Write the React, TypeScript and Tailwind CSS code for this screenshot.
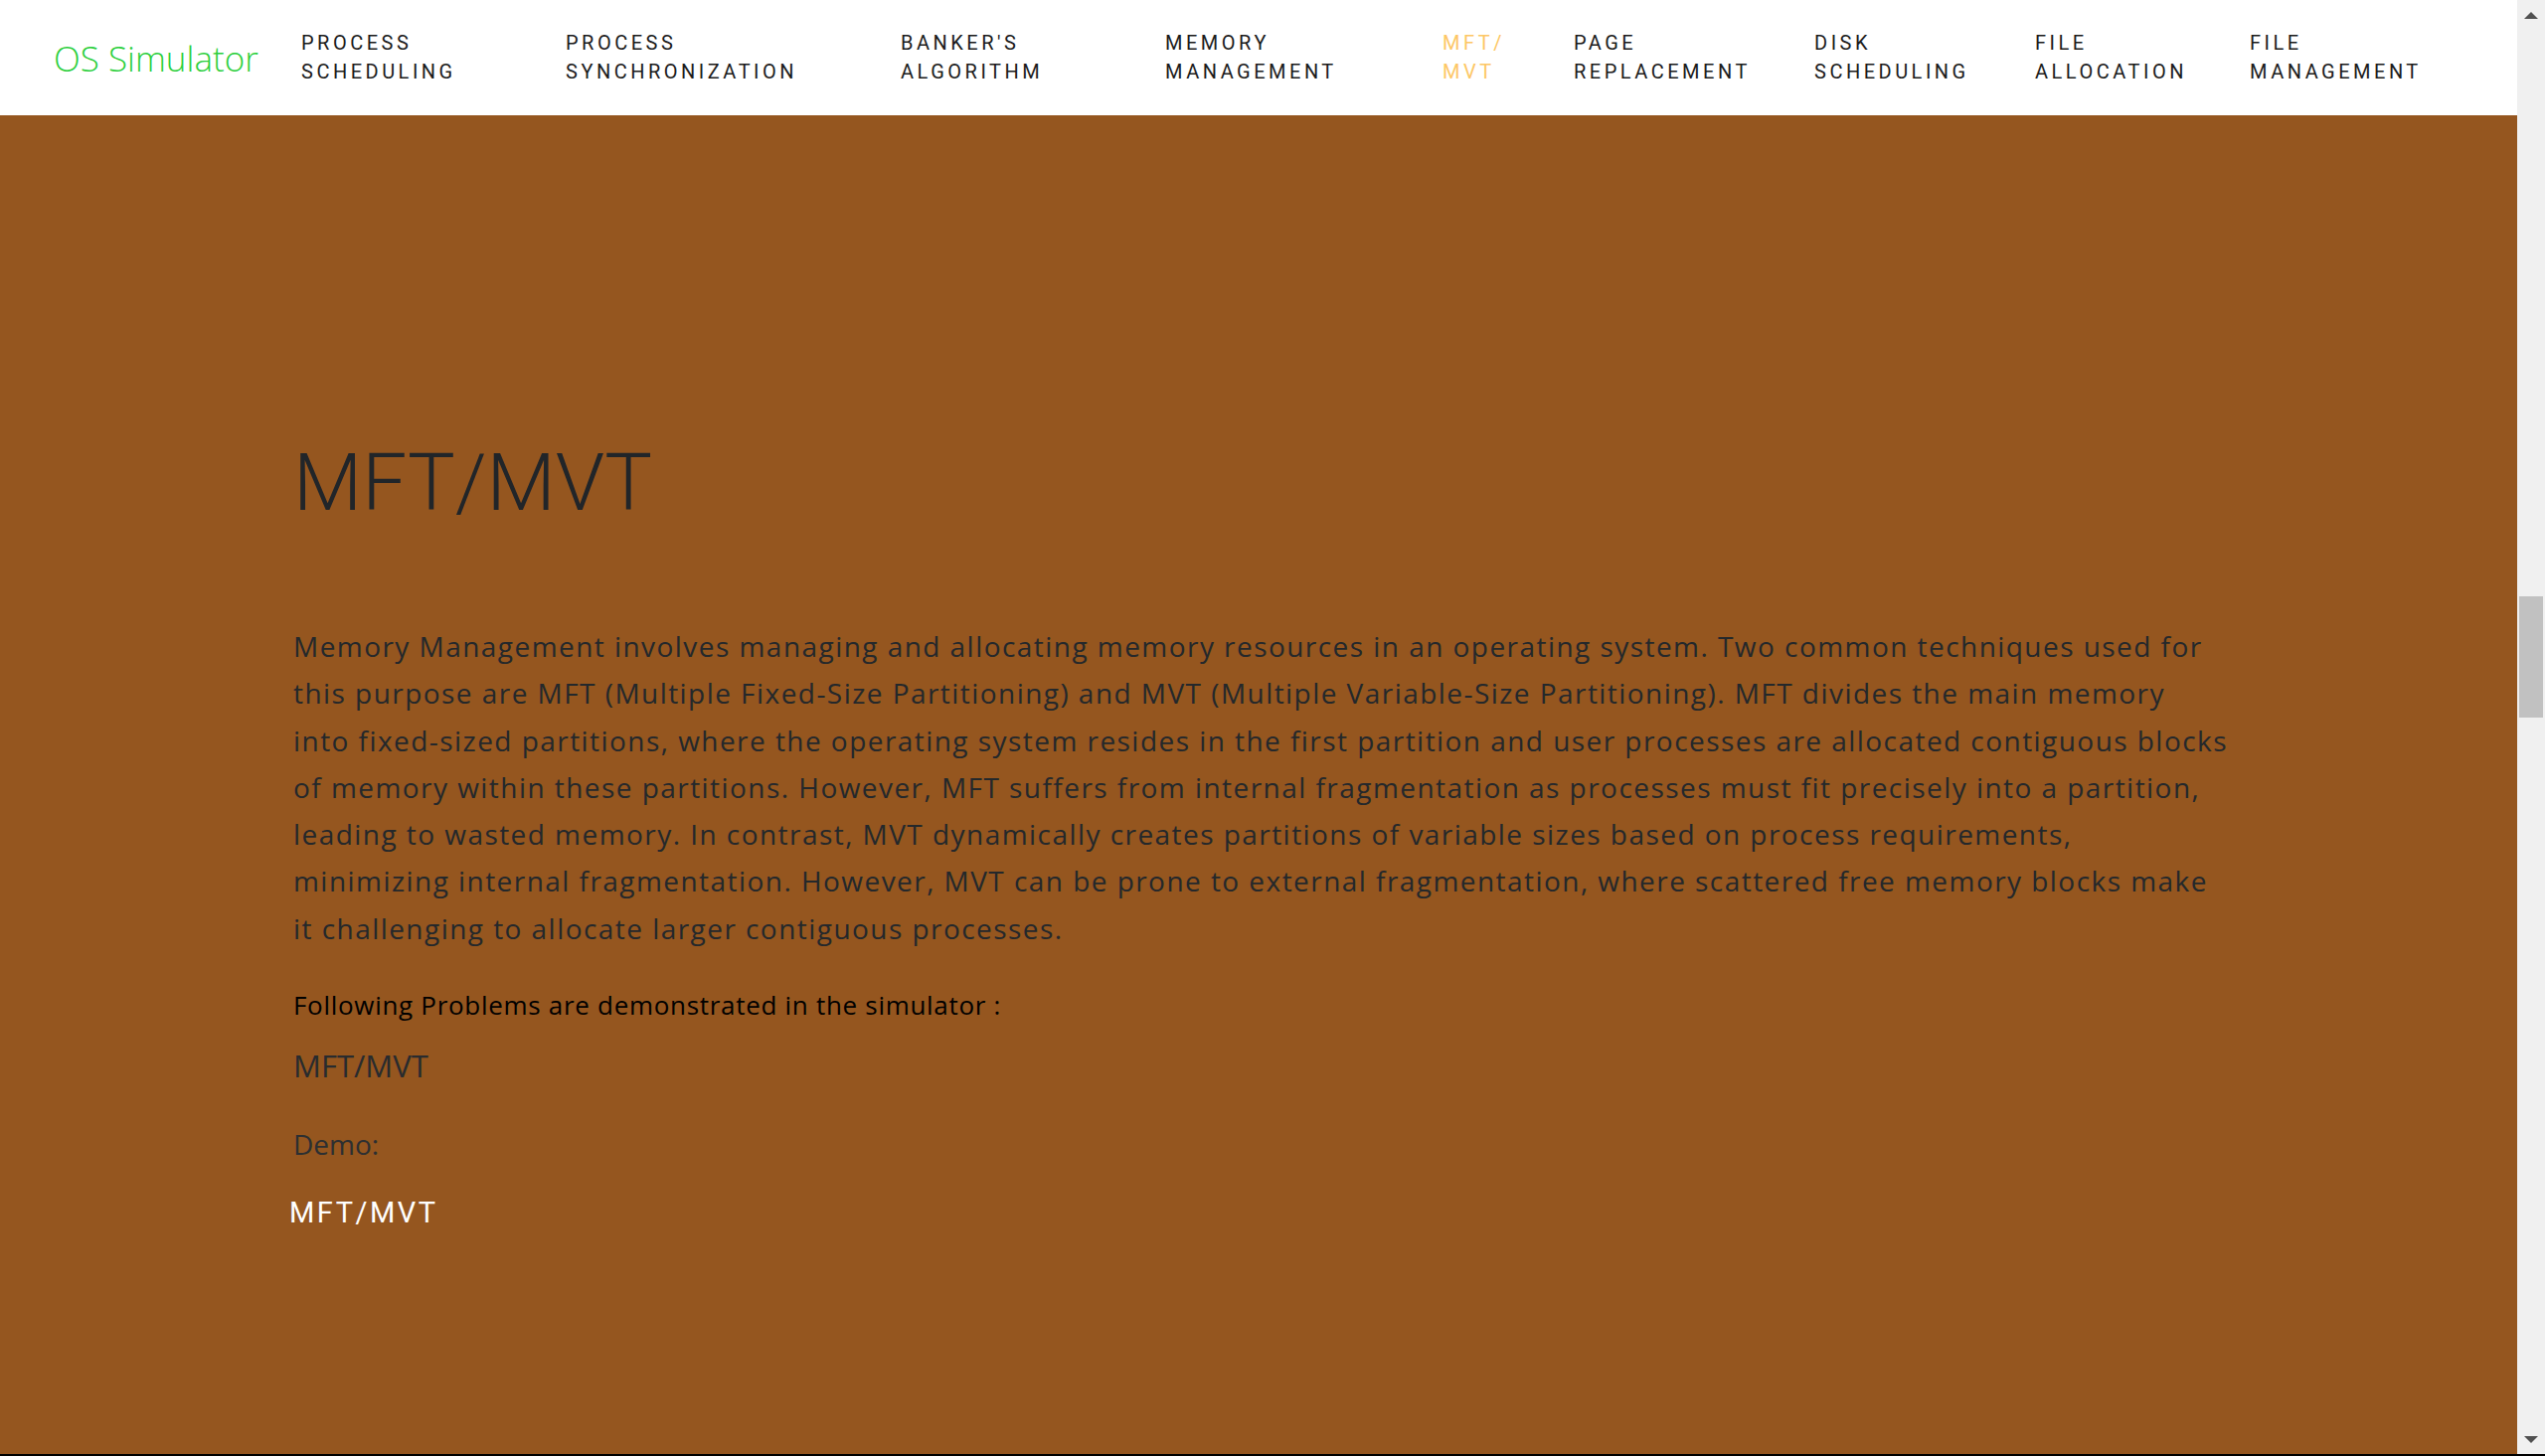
import React from 'react';

const navItems = [
  { top: 'Process', bottom: 'Scheduling', w: 'w-[266px]' },
  { top: 'Process', bottom: 'Synchronization', w: 'w-[337px]' },
  { top: "Banker's", bottom: 'Algorithm', w: 'w-[266px]' },
  { top: 'Memory', bottom: 'Management', w: 'w-[279px]' },
  { top: 'MFT/', bottom: 'MVT', w: 'w-[132px]', active: true },
  { top: 'Page', bottom: 'Replacement', w: 'w-[242px]' },
  { top: 'Disk', bottom: 'Scheduling', w: 'w-[222px]' },
  { top: 'File', bottom: 'Allocation', w: 'w-[216px]' },
  { top: 'File', bottom: 'Management', w: 'w-auto' },
];

const paragraphLines = [
  'Memory Management involves managing and allocating memory resources in an operating system. Two common techniques used for',
  'this purpose are MFT (Multiple Fixed-Size Partitioning) and MVT (Multiple Variable-Size Partitioning). MFT divides the main memory',
  'into fixed-sized partitions, where the operating system resides in the first partition and user processes are allocated contiguous blocks',
  'of memory within these partitions. However, MFT suffers from internal fragmentation as processes must fit precisely into a partition,',
  'leading to wasted memory. In contrast, MVT dynamically creates partitions of variable sizes based on process requirements,',
  'minimizing internal fragmentation. However, MVT can be prone to external fragmentation, where scattered free memory blocks make',
  'it challenging to allocate larger contiguous processes.',
];

const Navbar: React.FC = () => (
  <nav className="h-[116px] bg-white flex items-center pl-[54px] shrink-0">
    <a className="w-[249px] text-[35px] font-light text-[#2ccf3c] font-['Open_Sans',sans-serif] leading-none">
      OS Simulator
    </a>
    <ul className="flex items-center">
      {navItems.map((item, i) => (
        <li
          key={i}
          className={`${item.w} uppercase text-[20px] leading-[29px] tracking-[3.5px] font-['Roboto',sans-serif] ${
            item.active ? 'text-[#fdc766]' : 'text-[#1c1c1c]'
          }`}
        >
          {item.top}
          <br />
          {item.bottom}
        </li>
      ))}
    </ul>
  </nav>
);

const Scrollbar: React.FC = () => (
  <div className="w-[28px] shrink-0 h-full bg-[#f0f0f0] flex flex-col items-center">
    <div className="h-[30px] flex items-center justify-center">
      <div className="w-0 h-0 border-l-[7px] border-r-[7px] border-b-[7px] border-l-transparent border-r-transparent border-b-[#505050]" />
    </div>
    <div className="flex-1 w-full flex flex-col px-[2px]">
      <div className="h-[570px]" />
      <div className="h-[122px] w-full bg-[#c1c1c1]" />
    </div>
    <div className="h-[30px] flex items-center justify-center">
      <div className="w-0 h-0 border-l-[7px] border-r-[7px] border-t-[7px] border-l-transparent border-r-transparent border-t-[#505050]" />
    </div>
  </div>
);

export default function App() {
  return (
    <div className="w-[2560px] h-[1465px] flex overflow-hidden border-b-2 border-black bg-[#95561f]">
      <div className="flex-1 min-w-0 overflow-hidden flex flex-col">
        <Navbar />
        <main className="flex-1 bg-[#95561f] pl-[295px] pr-[200px]">
          <h1 className="mt-[322px] text-[80px] leading-[1.2] font-light text-[#212529] font-['Roboto',sans-serif]">
            MFT/MVT
          </h1>
          <p className="mt-[93px] text-[28px] leading-[47.3px] tracking-[1.45px] text-[#24282b] font-['Open_Sans',sans-serif] whitespace-nowrap">
            {paragraphLines.map((line, i) => (
              <React.Fragment key={i}>
                {line}
                {i < paragraphLines.length - 1 && <br />}
              </React.Fragment>
            ))}
          </p>
          <p className="mt-[34px] text-[26px] leading-[39px] tracking-[0.7px] text-black font-['Open_Sans',sans-serif]">
            Following Problems are demonstrated in the simulator :
          </p>
          <p className="mt-[18px] text-[31px] leading-[46px] text-[#282b2e] font-['Open_Sans',sans-serif]">MFT/MVT</p>
          <p className="mt-[35px] text-[28px] leading-[42px] text-[#2c2f31] font-['Open_Sans',sans-serif]">Demo:</p>
          <a className="block mt-[27px] -ml-[4px] text-[29px] leading-[43px] tracking-[2.5px] text-white font-['Roboto',sans-serif]">
            MFT/MVT
          </a>
        </main>
      </div>
      <Scrollbar />
    </div>
  );
}
